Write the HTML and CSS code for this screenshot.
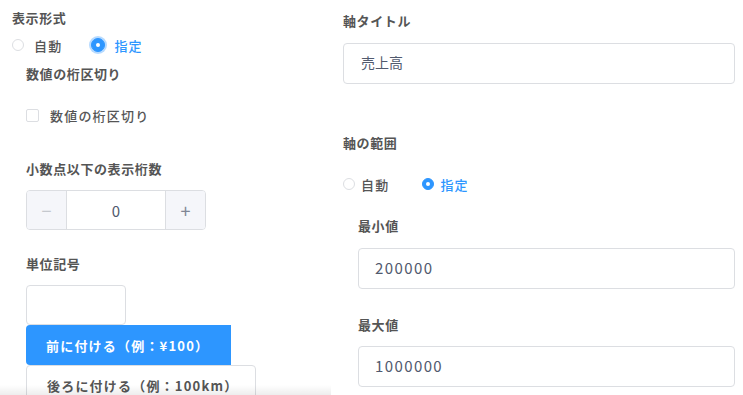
FILE: index.html
```html
<!DOCTYPE html>
<html lang="ja">
<head>
<meta charset="UTF-8">
<meta name="viewport" content="width=device-width, initial-scale=1.0">
<title>軸の設定</title>
<link rel="stylesheet" href="styles.css">
</head>
<body>
    <div class="page">
        <div class="pane-left">
            <div class="label">表示形式</div>
            <div class="radio-row radio-row-left">
                <label class="radio"><span class="radio-dot"></span>自動</label>
                <label class="radio checked focus"><span class="radio-dot"></span>指定</label>
            </div>
            <div class="sub">
                <div class="label label-sep">数値の桁区切り</div>
                <label class="check"><span class="check-box"></span>数値の桁区切り</label>

                <div class="label label-digits">小数点以下の表示桁数</div>
                <div class="stepper">
                    <span class="step step-minus">&minus;</span>
                    <span class="step-value">0</span>
                    <span class="step step-plus">+</span>
                </div>

                <div class="label label-unit">単位記号</div>
                <div class="input input-unit"></div>
                <div class="btn btn-primary">前に付ける（例：¥100）</div>
                <div class="btn btn-default">後ろに付ける（例：100km）</div>
            </div>
            <div class="pane-shadow"></div>
        </div>

        <div class="pane-right">
            <div class="label">軸タイトル</div>
            <div class="input input-title">売上高</div>

            <div class="label label-range">軸の範囲</div>
            <div class="radio-row radio-row-right">
                <label class="radio"><span class="radio-dot"></span>自動</label>
                <label class="radio checked"><span class="radio-dot"></span>指定</label>
            </div>

            <div class="sub-right">
                <div class="label label-min">最小値</div>
                <div class="input input-num">200000</div>
                <div class="label label-max">最大値</div>
                <div class="input input-num input-max">1000000</div>
            </div>
        </div>
    </div>
</body>
</html>
```

FILE: styles.css
```css
body {
    margin: 0;
    background-color: #fff;
    font-family: "Noto Sans CJK JP", "Noto Sans", sans-serif;
    font-size: 13px;
    color: #515a6e;
}

.page {
    display: flex;
    height: 395px;
    overflow: hidden;
}

.pane-left {
    position: relative;
    width: 331px;
    padding-top: 8px;
    box-sizing: border-box;
    overflow: hidden;
}

.pane-right {
    flex: 1;
    padding: 11px 8px 0 12px;
}

.label {
    height: 20px;
    line-height: 20px;
    font-weight: 600;
    color: #555;
    letter-spacing: 0.6px;
}

.pane-left > .label {
    padding-left: 12px;
}

/* radios */
.radio-row {
    display: flex;
    height: 20px;
    align-items: center;
}

.radio-row-left {
    margin-top: 7px;
    padding-left: 12px;
}

.radio-row-right {
    margin-top: 21px;
}

.radio {
    display: flex;
    align-items: center;
    letter-spacing: 1.2px;
    font-weight: 500;
    color: #555;
}

.radio-dot {
    width: 12px;
    height: 12px;
    border: 1px solid #dcdee2;
    border-radius: 50%;
    box-sizing: border-box;
    position: relative;
}

.radio-row-left .radio-dot {
    margin-right: 10px;
}

.radio-row-left .radio + .radio {
    margin-left: 29px;
}

.radio-row-right .radio-dot {
    margin-right: 6px;
}

.radio-row-right .radio + .radio {
    margin-left: 33px;
}

.radio.checked {
    color: #2d96ff;
}

.radio.checked .radio-dot {
    background-color: #2d96ff;
    border-color: #2d96ff;
}

.radio.checked .radio-dot::after {
    content: "";
    position: absolute;
    left: 3px;
    top: 3px;
    width: 4px;
    height: 4px;
    border-radius: 50%;
    background-color: #fff;
}

.radio.focus .radio-dot {
    width: 14px;
    height: 14px;
    box-shadow: 0 0 0 2px rgba(45, 150, 255, 0.35);
}

.radio.focus .radio-dot::after {
    left: 4px;
    top: 4px;
}

.radio-row-left .radio.focus .radio-dot {
    margin-right: 9px;
}

/* left sub section */
.sub {
    padding-left: 26px;
}

.label-sep {
    margin-top: 9px;
}

.check {
    display: flex;
    align-items: center;
    height: 20px;
    margin-top: 21px;
    color: #555;
    font-weight: 500;
    letter-spacing: 1.2px;
}

.check-box {
    width: 13px;
    height: 13px;
    border: 1px solid #dcdee2;
    border-radius: 2px;
    box-sizing: border-box;
    margin-right: 11px;
}

.label-digits {
    margin-top: 34px;
}

.stepper {
    display: flex;
    width: 180px;
    height: 40px;
    margin-top: 11px;
    border: 1px solid #dcdee2;
    border-radius: 4px;
    box-sizing: border-box;
    overflow: hidden;
}

.step {
    width: 39px;
    background-color: #f5f6fa;
    display: flex;
    align-items: center;
    justify-content: center;
    font-size: 18px;
    color: #808695;
}

.step-minus {
    color: #c5c8ce;
    border-right: 1px solid #dcdee2;
}

.step-plus {
    border-left: 1px solid #dcdee2;
}

.step-value {
    flex: 1;
    display: flex;
    align-items: center;
    justify-content: center;
    font-size: 15px;
    color: #515a6e;
}

.label-unit {
    margin-top: 24px;
}

.input {
    height: 41px;
    border: 1px solid #dcdee2;
    border-radius: 4px;
    box-sizing: border-box;
    padding: 0 0 3px 17px;
    display: flex;
    align-items: center;
    font-size: 14px;
    color: #515a6e;
}

.input-unit {
    width: 100px;
    height: 40px;
    margin-top: 11px;
}

.btn {
    display: inline-flex;
    align-items: center;
    height: 40px;
    padding: 0 20px;
    box-sizing: border-box;
    font-weight: 600;
    letter-spacing: 1.2px;
}

.btn-primary {
    width: 205px;
    background-color: #2d96ff;
    color: #fff;
    border-radius: 4px 0 0 4px;
}

.btn-default {
    width: 230px;
    display: flex;
    color: #555;
    border: 1px solid #dcdee2;
    border-radius: 4px;
}

.pane-shadow {
    position: absolute;
    left: 0;
    right: 0;
    bottom: 0;
    height: 10px;
    background: linear-gradient(to bottom, rgba(0, 0, 0, 0), rgba(0, 0, 0, 0.07));
}

/* right */
.input-title {
    margin-top: 12px;
}

.label-range {
    margin-top: 49px;
}

.sub-right {
    padding-left: 15px;
}

.label-min {
    margin-top: 22px;
}

.input-num {
    margin-top: 12px;
    padding-left: 16px;
    font-size: 15px;
    letter-spacing: 1.4px;
}

.label-max {
    margin-top: 26px;
}

.input-max {
    margin-top: 11px;
}
```
